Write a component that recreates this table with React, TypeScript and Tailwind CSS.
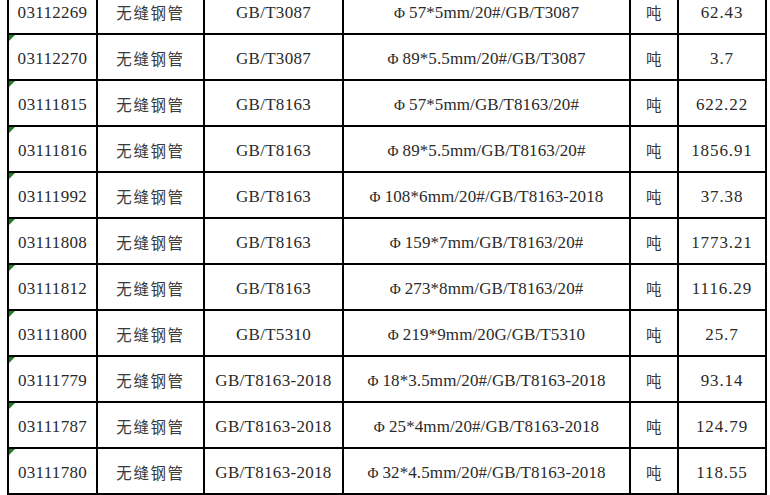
const rows = [
  ["03112269", "GB/T3087", "57*5mm/20#/GB/T3087", "62.43"],
  ["03112270", "GB/T3087", "89*5.5mm/20#/GB/T3087", "3.7"],
  ["03111815", "GB/T8163", "57*5mm/GB/T8163/20#", "622.22"],
  ["03111816", "GB/T8163", "89*5.5mm/GB/T8163/20#", "1856.91"],
  ["03111992", "GB/T8163", "108*6mm/20#/GB/T8163-2018", "37.38"],
  ["03111808", "GB/T8163", "159*7mm/GB/T8163/20#", "1773.21"],
  ["03111812", "GB/T8163", "273*8mm/GB/T8163/20#", "1116.29"],
  ["03111800", "GB/T5310", "219*9mm/20G/GB/T5310", "25.7"],
  ["03111779", "GB/T8163-2018", "18*3.5mm/20#/GB/T8163-2018", "93.14"],
  ["03111787", "GB/T8163-2018", "25*4mm/20#/GB/T8163-2018", "124.79"],
  ["03111780", "GB/T8163-2018", "32*4.5mm/20#/GB/T8163-2018", "118.55"],
];

const cell = "flex items-center justify-center bg-white pt-[4px]";
const cjk = "[font-family:Noto_Sans_CJK_SC,sans-serif] text-[15.5px] text-[#3a3a3a]";

export default function App() {
  return (
    <div className="h-[495px] w-[770px] overflow-hidden bg-white pl-[7px] [font-family:Liberation_Serif,Noto_Sans_CJK_SC,serif] text-[17px] tracking-[0.3px] text-[#2a2a2a]">
      <div className="-mt-[13px] grid w-max grid-cols-[87px_105px_137px_285px_46px_86px] auto-rows-[44px] gap-[2px] bg-black p-[2px]">
        {rows.map(([code, std, spec, qty]) => (
          <div key={code} className="contents">
            <div className={`${cell} relative`}>
              <span className="absolute top-0 left-0 h-0 w-0 border-t-[6px] border-r-[6px] border-t-[#1f7f1f] border-r-transparent" />
              {code}
            </div>
            <div className={`${cell} ${cjk} tracking-[1.6px]`}>无缝钢管</div>
            <div className={cell}>{std}</div>
            <div className={`${cell} bg-[#d2d2fb] tracking-[0.1px]`}>
              <span className="mr-[4px] text-[15px]">Φ</span>
              {spec}
            </div>
            <div className={`${cell} ${cjk}`}>吨</div>
            <div className={`${cell} tracking-[0.9px]`}>{qty}</div>
          </div>
        ))}
      </div>
    </div>
  );
}
